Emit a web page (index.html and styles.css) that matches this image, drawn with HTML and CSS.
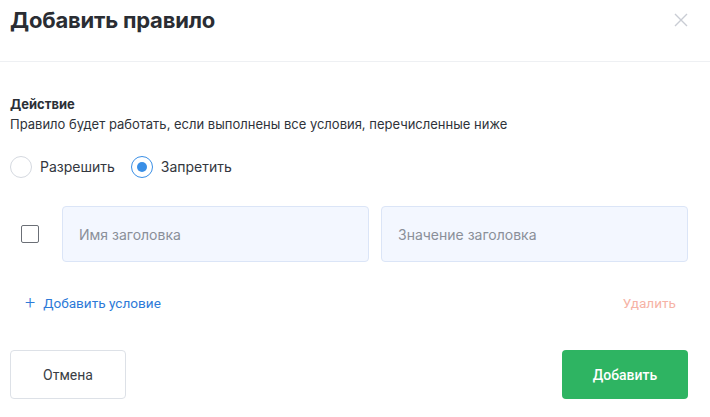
FILE: index.html
```html
<!DOCTYPE html>
<html lang="ru">
<head>
<meta charset="utf-8">
<link rel="stylesheet" href="styles.css">
</head>
<body>
<div class="modal">
  <header class="head">
    <h1 class="title">Добавить правило</h1>
    <button class="close" aria-label="Закрыть">
      <svg width="14" height="14" viewBox="0 0 14 14"><path d="M1 1L13 13M13 1L1 13" stroke="#c9ccd4" stroke-width="1.4" fill="none"/></svg>
    </button>
  </header>
  <section class="body">
    <div class="label">Действие</div>
    <div class="hint">Правило будет работать, если выполнены все условия, перечисленные ниже</div>
    <div class="radios">
      <label class="radio"><span class="dot"></span>Разрешить</label>
      <label class="radio on"><span class="dot"></span>Запретить</label>
    </div>
    <div class="cond">
      <span class="check"></span>
      <div class="inputs">
        <div class="field">Имя заголовка</div>
        <div class="field">Значение заголовка</div>
      </div>
    </div>
    <div class="links">
      <a class="add"><span class="plus">+</span>Добавить условие</a>
      <a class="del">Удалить</a>
    </div>
  </section>
  <footer class="foot">
    <button class="btn cancel">Отмена</button>
    <button class="btn ok">Добавить</button>
  </footer>
</div>
</body>
</html>
```
FILE: styles.css
```css
* { box-sizing: border-box; }
html, body { margin: 0; padding: 0; background: #fff; }
body { font-family: Inter, "Noto Sans", sans-serif; color: #2b2f36; }
.modal { width: 710px; height: 417px; }
.head {
  height: 62px;
  border-bottom: 1px solid #eef0f3;
  display: flex;
  justify-content: space-between;
  align-items: flex-start;
  padding: 5px 22px 0 10px;
}
.title { margin: 0; font-size: 22px; font-weight: 700; line-height: 30px; color: #2a2d33; letter-spacing: -0.2px; }
.close { border: 0; background: none; padding: 0; margin-top: 8px; width: 14px; height: 14px; display: flex; }
.body { padding: 33px 10px 0 10px; }
.label { font-size: 13px; font-weight: 700; line-height: 18px; color: #2b2f36; }
.hint { font-size: 13px; line-height: 18px; color: #2f333a; margin-top: 2px; }
.radios { display: flex; gap: 16px; margin-top: 23px; }
.radio { display: flex; align-items: center; gap: 8px; font-size: 14px; color: #33373e; line-height: 22px; }
.dot { width: 22px; height: 22px; border-radius: 50%; border: 1px solid #d5d9e0; display: flex; align-items: center; justify-content: center; }
.radio.on .dot { border-color: #3a8fe6; }
.radio.on .dot::after { content: ""; width: 10px; height: 10px; border-radius: 50%; background: #3a8fe6; }
.cond { display: flex; align-items: center; margin-top: 28px; }
.check { width: 18px; height: 18px; border: 1.5px solid #6b6f76; border-radius: 2px; margin-left: 11px; margin-right: 23px; }
.inputs { display: flex; gap: 12px; }
.field {
  width: 307px; height: 56px;
  background: #f3f7ff;
  border: 1px solid #dbe5f7;
  border-radius: 4px;
  display: flex; align-items: center;
  padding-left: 16px;
  font-size: 14px; color: #8a8f99;
}
.links { display: flex; justify-content: space-between; align-items: center; margin-top: 33px; padding: 0 24px 0 15px; font-family: Roboto, sans-serif; font-size: 13.6px; }
.add { color: #2d7ad8; display: flex; align-items: center; }
.plus { font-size: 18px; margin-right: 8px; line-height: 16px; font-weight: 300; }
.del { color: #f6b3a6; }
.foot { display: flex; justify-content: space-between; padding: 39px 22px 0 10px; }
.btn { font-family: Roboto, sans-serif; font-size: 14px; border-radius: 4px; height: 49px; cursor: pointer; }
.cancel { width: 116px; background: #fff; border: 1px solid #dde1e7; color: #3a3e45; }
.ok { width: 126px; background: #2eb462; border: 0; color: #fff; font-weight: 500; }
```
